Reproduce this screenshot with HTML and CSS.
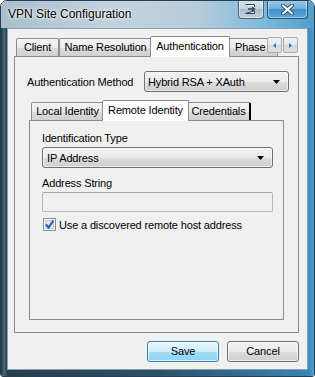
FILE: index.html
```html
<!DOCTYPE html>
<html lang="en">
<head>
    <meta charset="UTF-8">
    <title>VPN Site Configuration</title>
    <link rel="stylesheet" href="styles.css">
</head>
<body>

    <div class="window">
        <!-- Title bar -->
        <div class="titlebar">
            <span class="title">VPN Site Configuration</span>
            <div class="caption-buttons">
                <div class="cap cap-tray">
                    <svg width="12" height="10" viewBox="0 0 12 10">
                        <path d="M0.5 0.5 H9.5 V3 M9.5 7 V9.5 H0.5 Z" fill="#fff" stroke="#34434f"/>
                        <path d="M3 5 H9 M7 3 L9.5 5 L7 7" fill="none" stroke="#34434f" stroke-width="1.4"/>
                    </svg>
                </div>
                <div class="cap cap-close">
                    <svg width="13" height="11" viewBox="0 0 13 11">
                        <path d="M2 1.5 L11 9.5 M11 1.5 L2 9.5" stroke="#35495a" stroke-width="4" stroke-linecap="round"/>
                        <path d="M2 1.5 L11 9.5 M11 1.5 L2 9.5" stroke="#fff" stroke-width="2" stroke-linecap="round"/>
                    </svg>
                </div>
            </div>
        </div>

        <div class="frame">
            <div class="client">

                <!-- Outer tabs -->
                <div class="tabctl">
                    <div class="tabrow outer-row">
                        <div class="tab tab-client">Client</div>
                        <div class="tab tab-names">Name Resolution</div>
                        <div class="tab active tab-auth">Authentication</div>
                        <div class="tab tab-phase">Phase 1</div>
                        <div class="tab-scroll">
                            <div class="scroll-btn">
                                <svg width="3" height="5" viewBox="0 0 3 5"><polygon points="3,0 3,5 0,2.5" fill="#1f78c4"/></svg>
                            </div>
                            <div class="scroll-btn">
                                <svg width="3" height="5" viewBox="0 0 3 5"><polygon points="0,0 0,5 3,2.5" fill="#1f78c4"/></svg>
                            </div>
                        </div>
                    </div>

                    <div class="panel outer-panel">
                        <div class="method-row">
                            <span>Authentication Method</span>
                            <div class="combo combo-method">
                                <span>Hybrid RSA + XAuth</span>
                                <svg class="caret" width="7" height="4" viewBox="0 0 7 4"><polygon points="0,0 7,0 3.5,4" fill="#000"/></svg>
                            </div>
                        </div>

                        <!-- Inner tabs -->
                        <div class="tabctl inner-ctl">
                            <div class="tabrow">
                                <div class="tab tab-local">Local Identity</div>
                                <div class="tab active tab-remote">Remote Identity</div>
                                <div class="tab tab-creds">Credentials</div>
                            </div>
                            <div class="panel inner-panel">
                                <div class="label">Identification Type</div>
                                <div class="combo">
                                    <span>IP Address</span>
                                    <svg class="caret" width="7" height="4" viewBox="0 0 7 4"><polygon points="0,0 7,0 3.5,4" fill="#000"/></svg>
                                </div>

                                <div class="label label-gap">Address String</div>
                                <div class="textbox"></div>

                                <div class="check-row">
                                    <svg class="checkbox" width="13" height="13" viewBox="0 0 13 13">
                                        <rect x="0.5" y="0.5" width="12" height="12" fill="#f4f4f4" stroke="#8e8f8f"/>
                                        <rect x="2.5" y="2.5" width="8" height="8" fill="#dfe6ee" stroke="#c4cbd3"/>
                                        <path d="M3 6.5 L5.5 9.5 L10.5 2.5" fill="none" stroke="#1e5fa8" stroke-width="2"/>
                                    </svg>
                                    <span>Use a discovered remote host address</span>
                                </div>
                            </div>
                        </div>
                    </div>
                </div>

                <!-- Buttons -->
                <div class="buttons">
                    <div class="btn btn-default">Save</div>
                    <div class="btn">Cancel</div>
                </div>
            </div>
        </div>
    </div>

</body>
</html>
```

FILE: styles.css
```css
body {
    margin: 0;
    background-color: #ffffff;
    font-family: "Liberation Sans", Arial, sans-serif;
    font-size: 11px;
    letter-spacing: -0.15px;
    color: #000;
}

.window {
    width: 315px;
    height: 377px;
    box-sizing: border-box;
    display: flex;
    flex-direction: column;
    border: 1px solid #2b3d4b;
    border-radius: 7px 7px 3px 3px;
    overflow: hidden;
}

/* Title bar */
.titlebar {
    height: 27px;
    display: flex;
    align-items: flex-start;
    background: linear-gradient(to right, #a9bfcd 0%, #c2d3de 35%, #b8cdda 62%, #82bcdc 82%, #4f9fcc 100%);
}

.title {
    margin: 5px 0 0 7px;
    font-size: 12px;
    letter-spacing: 0;
    line-height: 16px;
    text-shadow: 0 0 4px #ffffff, 0 0 2px #ffffff;
}

.caption-buttons {
    margin: -1px 6px 0 auto;
    display: flex;
    gap: 3px;
}

.cap {
    height: 19px;
    box-sizing: border-box;
    display: flex;
    align-items: center;
    justify-content: center;
    border: 1px solid #4e6272;
    border-top: none;
    border-radius: 0 0 4px 4px;
    box-shadow: inset 0 0 0 1px rgba(255, 255, 255, 0.45);
}

.cap-tray {
    width: 26px;
    background: linear-gradient(#dbe5ec, #c0d0db 50%, #a7bccb 51%, #bfd2de);
}

.cap-close {
    width: 41px;
    border-color: #284e6c;
    background: linear-gradient(#9ccbea, #6cb0df 50%, #3f8fcd 51%, #5aa9dc);
}

/* Glass frame round the client area */
.frame {
    flex: 1;
    display: flex;
    padding: 0 6px 6px 6px;
    background: linear-gradient(to right, #1b3141 0, #4a687a 3px, #253f52 6px, #2c5166 50%, #3785b8 calc(100% - 6px), #49a0d4 100%);
}

.client {
    flex: 1;
    display: flex;
    flex-direction: column;
    background-color: #f0f0f0;
    border: 1px solid #8aa0b0;
    padding: 7px 8px 7px 6px;
}

/* Tab controls */
.tabctl {
    flex: 1;
    display: flex;
    flex-direction: column;
}

.tabrow {
    height: 20px;
    display: flex;
    align-items: flex-end;
    padding-left: 2px;
    position: relative;
}

.tab {
    height: 18px;
    box-sizing: border-box;
    border: 1px solid #898c95;
    border-bottom: none;
    border-radius: 2px 2px 0 0;
    background: linear-gradient(#f3f3f3, #ebebeb 50%, #dddddd 51%, #d0d0d0);
    line-height: 17px;
    text-align: center;
    white-space: nowrap;
    overflow: hidden;
}

.tab.active {
    height: 21px;
    margin: 0 -2px -1px -2px;
    background: #ffffff;
    line-height: 18px;
    position: relative;
    z-index: 2;
}

.tab-client { width: 43px; }
.tab-names { width: 93px; }
.tab-auth { width: 80px; }
.tab-phase { width: 50px; text-align: left; padding-left: 6px; }

.tab-local { width: 73px; }
.tab-remote { width: 87px; }
.tab-creds { width: 64px; border-right: 2px solid #000; }

.tab-scroll {
    position: absolute;
    right: 1px;
    top: 1px;
    display: flex;
    gap: 1px;
}

.scroll-btn {
    width: 15px;
    height: 16px;
    box-sizing: border-box;
    display: flex;
    align-items: center;
    justify-content: center;
    border: 1px solid #a3abb3;
    border-radius: 2px;
    background: linear-gradient(#f4f4f4, #e4e6e8 50%, #d6d9dc 51%, #e0e3e6);
}

.panel {
    flex: 1;
    border: 1px solid #898c95;
    background-color: #f0f0f0;
}

.outer-panel {
    display: flex;
    flex-direction: column;
    padding: 14px 9px 12px 12px;
}

.method-row {
    display: flex;
    align-items: center;
    justify-content: space-between;
}

.inner-ctl {
    margin: 8px 5px 0 2px;
}

.inner-panel {
    padding: 11px 10px 0 12px;
}

.label {
    line-height: 13px;
}

.label-gap {
    margin-top: 9px;
}

/* Inputs */
.combo {
    height: 21px;
    box-sizing: border-box;
    margin-top: 2px;
    display: flex;
    align-items: center;
    padding-left: 4px;
    border: 1px solid #707070;
    border-radius: 3px;
    background: linear-gradient(#f2f2f2, #ebebeb 50%, #dddddd 51%, #cfcfcf);
    box-shadow: inset 0 0 0 1px rgba(255, 255, 255, 0.6);
}

.combo-method {
    width: 145px;
    margin-top: 0;
    padding-left: 3px;
}

.caret {
    margin: 1px 8px 0 auto;
}

.textbox {
    height: 20px;
    box-sizing: border-box;
    margin-top: 2px;
    border: 1px solid #b5b7bb;
    border-top-color: #a5a8ad;
    border-radius: 2px;
    background-color: #f0f0f0;
}

.check-row {
    margin-top: 6px;
    display: flex;
    align-items: center;
    gap: 3px;
    padding-left: 1px;
}

/* Dialog buttons */
.buttons {
    margin-top: 8px;
    display: flex;
    justify-content: flex-end;
    gap: 8px;
}

.btn {
    width: 72px;
    height: 21px;
    box-sizing: border-box;
    border: 1px solid #707070;
    border-radius: 3px;
    background: linear-gradient(#f2f2f2, #ebebeb 50%, #dddddd 51%, #cfcfcf);
    box-shadow: inset 0 0 0 1px rgba(255, 255, 255, 0.7);
    text-align: center;
    line-height: 19px;
}

.btn-default {
    border-color: #3c7fb1;
    background: linear-gradient(#e8f6fd, #cdeefc 50%, #a3dcf6 51%, #8fd2f1);
}
```
